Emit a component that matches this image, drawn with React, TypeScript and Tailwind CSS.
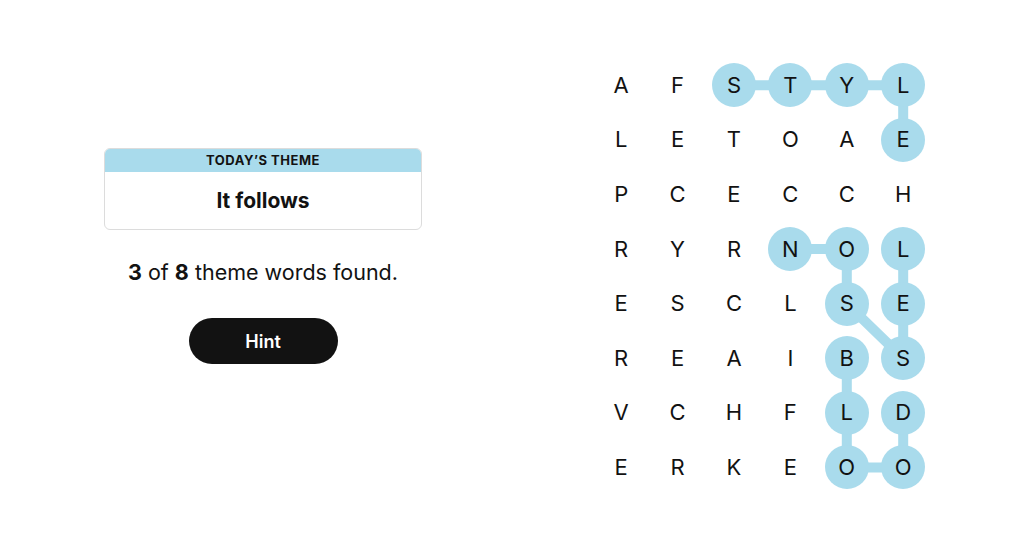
import React from "react"

const GRID = [
  "AFSTYL",
  "LETOAE",
  "PCECCH",
  "RYRNOL",
  "ESCLSE",
  "REAIBS",
  "VCHFLD",
  "ERKEOO",
]

const CW = 56.4
const RH = 54.6

// found words as paths of [row, col]
const FOUND: [number, number][][] = [
  [[0, 2], [0, 3], [0, 4], [0, 5], [1, 5]],
  [[3, 5], [4, 5], [5, 5], [4, 4], [3, 4], [3, 3]],
  [[5, 4], [6, 4], [7, 4], [7, 5], [6, 5]],
]

const lit = new Set(FOUND.flat().map(([r, c]) => `${r}-${c}`))

const cx = (c: number) => c * CW + CW / 2
const cy = (r: number) => r * RH + RH / 2

function Board() {
  return (
    <div className="relative w-[338.4px] h-[436.8px]">
      <svg className="absolute inset-0" width={338.4} height={436.8}>
        {FOUND.map((w, i) => (
          <polyline
            key={i}
            points={w.map(([r, c]) => `${cx(c)},${cy(r)}`).join(" ")}
            fill="none"
            stroke="#a9dbec"
            strokeWidth={10}
            strokeLinejoin="round"
          />
        ))}
      </svg>
      <div className="relative grid grid-cols-[repeat(6,56.4px)] grid-rows-[repeat(8,54.6px)]">
        {GRID.flatMap((row, r) =>
          row.split("").map((ch, c) => (
            <div key={`${r}-${c}`} className="flex items-center justify-center">
              <span
                className={
                  "flex h-[44px] w-[44px] items-center justify-center rounded-full text-[22px] text-[#121212] " +
                  (lit.has(`${r}-${c}`) ? "bg-[#a9dbec]" : "")
                }
              >
                {ch}
              </span>
            </div>
          ))
        )}
      </div>
    </div>
  )
}

export default function App() {
  return (
    <div className="flex h-[551px] w-[1024px] items-start bg-white font-['Inter',sans-serif] text-[#121212]">
      <div className="ml-[104px] mt-[148px] flex w-[318px] flex-col items-center">
        <div className="w-full overflow-hidden rounded-[6px] border border-[#dcdcdc]">
          <div className="flex h-[23px] items-center justify-center bg-[#a9dbec] text-[13px] font-bold tracking-[0.04em]">
            TODAY&rsquo;S THEME
          </div>
          <div className="flex h-[57px] items-center justify-center text-[21px] font-bold">It follows</div>
        </div>
        <p className="mt-[28px] text-[21.5px] leading-[28px]">
          <span className="font-bold">3</span> of <span className="font-bold">8</span> theme words found.
        </p>
        <button className="mt-[32px] h-[46px] w-[149px] rounded-full bg-[#121212] text-[18px] font-semibold text-white">
          Hint
        </button>
      </div>
      <div className="ml-[171px] mt-[58px]">
        <Board />
      </div>
    </div>
  )
}
